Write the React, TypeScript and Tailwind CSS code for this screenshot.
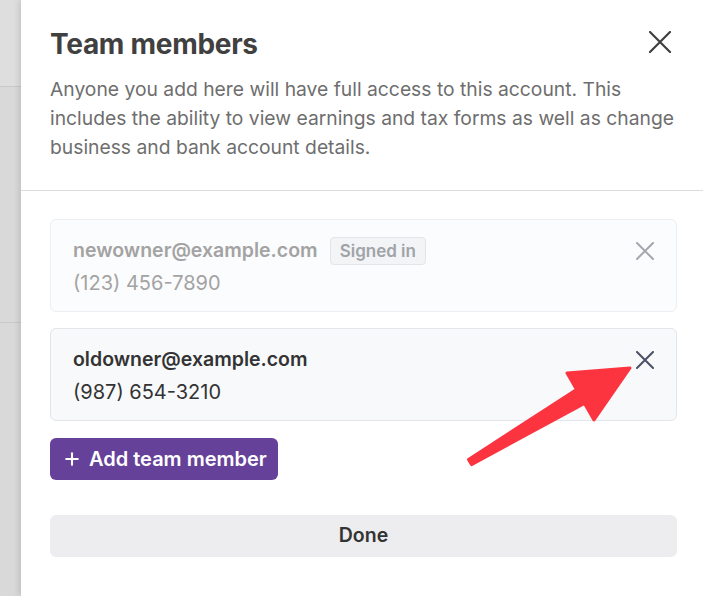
import { Plus } from "lucide-react";

const members = [
  { email: "newowner@example.com", phone: "(123) 456-7890", current: true },
  { email: "oldowner@example.com", phone: "(987) 654-3210", current: false },
];

function Cross({ size, stroke }: { size: number; stroke: number }) {
  return (
    <svg
      width={size}
      height={size}
      viewBox={`0 0 ${size} ${size}`}
      fill="none"
      stroke="currentColor"
      strokeWidth={stroke}
      strokeLinecap="round"
      aria-hidden="true"
    >
      <path d={`M1 1L${size - 1} ${size - 1}M${size - 1} 1L1 ${size - 1}`} />
    </svg>
  );
}

function Arrow() {
  return (
    <svg
      className="pointer-events-none absolute left-0 top-0"
      width="703"
      height="596"
      viewBox="0 0 703 596"
      aria-hidden="true"
    >
      <polygon
        points="468.5,459.4 576.5,389.6 567,373 630,368 594,420 584.5,403.4 471.5,464.6"
        fill="#fc3440"
        stroke="#fc3440"
        strokeWidth={3}
        strokeLinejoin="round"
      />
    </svg>
  );
}

export default function App() {
  return (
    <div
      className="relative flex h-[596px] w-[703px] overflow-hidden bg-white"
      style={{ fontFamily: "Inter, 'Noto Sans', sans-serif" }}
    >
      {/* page behind the sheet */}
      <div className="w-[21px] shrink-0 bg-[#d9d9d9]">
        <div className="h-[87px] border-b border-[#c9c9c9] bg-[#dedede]" />
        <div className="h-[236px] border-b border-[#c9c9c9]" />
      </div>

      <div className="flex min-w-0 flex-1 flex-col bg-white shadow-[-2px_0_6px_rgba(0,0,0,0.12)]">
        <div className="border-b border-[#dcdcdc] pb-[28px] pl-[29px] pr-[20px] pt-[26px]">
          <div className="flex items-start justify-between pr-[12px]">
            <h1 className="text-[28px] font-bold leading-[36px] tracking-[-0.01em] text-[#404040]">
              Team members
            </h1>
            <button className="mt-[5px] text-[#3f3f3f]">
              <Cross size={22} stroke={2.2} />
            </button>
          </div>
          <p className="mt-[13px] text-[19.3px] leading-[29px] text-[#6e6e6e]">
            Anyone you add here will have full access to this account. This
            includes the ability to view earnings and tax forms as well as change
            business and bank account details.
          </p>
        </div>

        <div className="flex flex-col pl-[29px] pr-[26px] pt-[28px]">
          <div className="flex flex-col gap-[16px]">
            {members.map((m) => (
              <div
                key={m.email}
                className={
                  m.current
                    ? "flex items-start justify-between rounded-[6px] border border-[#eceef1] bg-[#fbfcfd] pb-[12px] pl-[22px] pr-[22px] pt-[15px]"
                    : "flex items-start justify-between rounded-[6px] border border-[#e2e5ea] bg-[#f8f9fb] pb-[12px] pl-[22px] pr-[22px] pt-[15px]"
                }
              >
                <div className="flex flex-col">
                  <div className="flex h-[32px] items-center gap-[12px]">
                    <span
                      className={
                        m.current
                          ? "text-[19.5px] font-semibold text-[#a3a3a3]"
                          : "text-[19.5px] font-semibold text-[#333333]"
                      }
                    >
                      {m.email}
                    </span>
                    {m.current && (
                      <span className="rounded-[4px] border border-[#e3e5e8] bg-[#f3f4f6] px-[9px] text-[17px] font-semibold leading-[26px] text-[#a0a3a8]">
                        Signed in
                      </span>
                    )}
                  </div>
                  <span
                    className={
                      m.current
                        ? "text-[20px] leading-[32px] text-[#a3a3a3]"
                        : "text-[20px] leading-[32px] text-[#333333]"
                    }
                  >
                    {m.phone}
                  </span>
                </div>
                <button
                  className={
                    m.current
                      ? "mt-[7px] text-[#a3a7ae]"
                      : "mt-[7px] text-[#4b5162]"
                  }
                >
                  <Cross size={18} stroke={2} />
                </button>
              </div>
            ))}
          </div>

          <button className="mt-[17px] flex h-[42px] w-fit items-center gap-[7px] rounded-[6px] bg-[#66419a] pl-[12px] pr-[11px] text-[20px] font-semibold text-white">
            <Plus size={20} strokeWidth={2.5} />
            Add team member
          </button>

          <button className="mt-[35px] h-[42px] w-full rounded-[6px] bg-[#ededf0] text-[19.5px] font-semibold text-[#333333]">
            Done
          </button>
        </div>
      </div>

      <Arrow />
    </div>
  );
}
